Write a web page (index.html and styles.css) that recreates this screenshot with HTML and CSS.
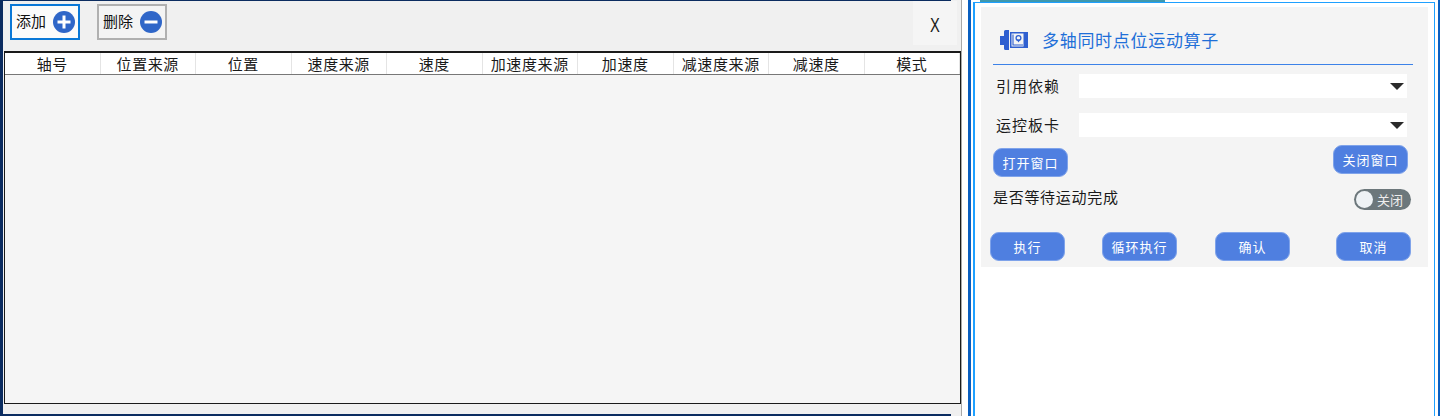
FILE: index.html
```html
<!DOCTYPE html>
<html lang="zh-CN">
  <head>
    <meta charset="UTF-8" />
    <title>多轴同时点位运动算子</title>
    <link rel="stylesheet" href="styles.css">
  </head>
  <body>
    <div class="page">
      <!-- Left: axis table -->
      <section class="axis-panel">
        <div class="panel-edge panel-edge-top"></div>
        <div class="toolbar">
          <button class="tool-btn tool-btn-active">
            <span>添加</span>
            <svg class="tool-icon" viewBox="0 0 24 24"><circle cx="12" cy="12" r="11" fill="#2f66c8"/><path d="M12 5.5v13M5.5 12h13" stroke="#fff" stroke-width="3"/></svg>
          </button>
          <button class="tool-btn">
            <span>删除</span>
            <svg class="tool-icon" viewBox="0 0 24 24"><circle cx="12" cy="12" r="11" fill="#2f66c8"/><path d="M5.5 12h13" stroke="#fff" stroke-width="3"/></svg>
          </button>
          <div class="close-box"><span>X</span></div>
        </div>
        <div class="axis-table">
          <div class="axis-head">
            <div>轴号</div>
            <div>位置来源</div>
            <div>位置</div>
            <div>速度来源</div>
            <div>速度</div>
            <div>加速度来源</div>
            <div>加速度</div>
            <div>减速度来源</div>
            <div>减速度</div>
            <div>模式</div>
          </div>
        </div>
        <div class="scroll-strip"></div>
        <div class="panel-edge panel-edge-bottom"></div>
      </section>

      <!-- Right: operator form -->
      <section class="form-window">
        <div class="form-outer">
          <div class="form-column">
            <div class="frame-tab"></div>
            <div class="form-frame">
              <div class="form-card">
                <div class="form-title">
                  <svg class="title-icon" viewBox="0 0 28 20">
                    <path d="M4 1.5Q4 0 5.5 0H9v20H5.5Q4 20 4 18.5V15H0V6h4z" fill="#2f5fd0"/>
                    <path d="M10 2h18v16H10z" fill="#2f5fd0"/>
                    <path d="M11.5 3.5h12v13h-12z" fill="#f4f4f4"/>
                    <path d="M13 4.5V15h10" fill="none" stroke="#2f5fd0" stroke-width="1.1"/>
                    <circle cx="18.5" cy="8" r="2.4" fill="none" stroke="#2f5fd0" stroke-width="1.3"/>
                    <path d="M16.6 9.6l1.9 3 1.9-3z" fill="#2f5fd0"/>
                  </svg>
                  <h1>多轴同时点位运动算子</h1>
                </div>

                <div class="form-row">
                  <label>引用依赖</label>
                  <div class="select"><span class="arrow"></span></div>
                </div>
                <div class="form-row form-row-second">
                  <label>运控板卡</label>
                  <div class="select"><span class="arrow"></span></div>
                </div>

                <div class="window-btns">
                  <button class="blue-btn open-btn">打开窗口</button>
                  <button class="blue-btn">关闭窗口</button>
                </div>

                <div class="wait-row">
                  <span>是否等待运动完成</span>
                  <div class="switch"><span class="knob"></span><span>关闭</span></div>
                </div>

                <div class="action-btns">
                  <button class="blue-btn">执行</button>
                  <button class="blue-btn">循环执行</button>
                  <button class="blue-btn">确认</button>
                  <button class="blue-btn">取消</button>
                </div>
              </div>
            </div>
          </div>
          <div class="edge-line"></div>
        </div>
      </section>
    </div>
  </body>
</html>
```
FILE: styles.css
```css
/* Basic Reset */
* {
  box-sizing: border-box;
  margin: 0;
  padding: 0;
}

body {
  font-family: "Noto Sans CJK SC", "Liberation Sans", sans-serif;
  background-color: #fff;
  color: #1a1a1a;
  overflow: hidden;
}

.page {
  display: flex;
  width: 1440px;
  height: 416px;
}

/* Left panel */
.axis-panel {
  flex-shrink: 0;
  width: 962px;
  height: 416px;
  display: flex;
  flex-direction: column;
  background-color: #f0f0f0;
  border-left: 3px solid #0b2c60;
  border-right: 1px solid #a8a8a8;
}

.panel-edge {
  width: 948px;
  background-color: #0b2c60;
}

.panel-edge-top {
  height: 1px;
}

.panel-edge-bottom {
  height: 2px;
}

.toolbar {
  height: 50px;
  display: flex;
  align-items: flex-start;
  padding: 3px 0 0 7px;
}

.tool-btn {
  width: 70px;
  height: 36px;
  display: flex;
  align-items: center;
  justify-content: space-between;
  padding: 0 2px 0 4px;
  margin-right: 17px;
  font-family: inherit;
  font-size: 15px;
  color: #111;
  background-color: #f4f4f4;
  border: 2px solid #b0b0b0;
}

.tool-btn span {
  margin-top: -3px;
}

.tool-btn-active {
  border-color: #0a78d7;
  background-color: #fbfbfb;
}

.tool-icon {
  width: 24px;
  height: 24px;
}

.close-box {
  width: 44px;
  height: 44px;
  margin: -3px 4px 0 auto;
  background-color: #f5f5f5;
  font-family: "Liberation Sans", sans-serif;
  font-size: 21px;
  line-height: 47px;
  text-align: center;
}

.close-box span {
  display: inline-block;
  transform: scaleX(0.7);
}

.axis-table {
  height: 353px;
  margin-left: 1px;
  background-color: #f5f5f5;
  border-top: 2px solid #1a1a1a;
  border-left: 1px solid #1a1a1a;
  border-right: 1px solid #1a1a1a;
  border-bottom: 1px solid #1a1a1a;
}

.axis-head {
  display: grid;
  grid-template-columns: repeat(10, 1fr);
  height: 22px;
  background-color: #fff;
  border-bottom: 1px solid #777;
}

.axis-head div {
  font-size: 15px;
  line-height: 21px;
  letter-spacing: 0.6px;
  text-align: center;
  border-right: 1px solid #e4e4e4;
}

.scroll-strip {
  flex: 1;
}

/* Right panel */
.form-window {
  flex: 1;
  height: 416px;
  padding-left: 6px;
}

.form-outer {
  display: flex;
  height: 416px;
  padding-left: 2px;
  border-left: 3px solid #0a5fc0;
}

.form-column {
  display: flex;
  flex-direction: column;
  width: 462px;
  margin-right: 3px;
}

.frame-tab {
  width: 185px;
  height: 2px;
  margin-left: 7px;
  background-color: #3f98ae;
}

.form-frame {
  flex: 1;
  padding: 4px 5px 0 6px;
  background-color: #fff;
  border-left: 2px solid #1ea0ff;
  border-right: 1px solid #1ea0ff;
  border-top: 1px solid #1ea0ff;
}

.form-card {
  width: 447px;
  height: 260px;
  padding: 23px 15px 0 12px;
  background-color: #f4f4f4;
}

.form-title {
  display: flex;
  align-items: center;
  height: 35px;
  padding: 0 0 14px 7px;
  border-bottom: 1px solid #3c82e8;
}

.title-icon {
  width: 28px;
  height: 20px;
  margin-right: 15px;
}

.form-title h1 {
  margin-top: -2px;
  margin-left: -1px;
  font-size: 17px;
  font-weight: 400;
  letter-spacing: 0.7px;
  color: #1f6fd8;
}

.form-row {
  display: flex;
  align-items: center;
  height: 24px;
  margin: 9px 6px 0 3px;
}

.form-row-second {
  margin-top: 15px;
}

.form-row label {
  width: 83px;
  margin-top: -2px;
  font-size: 15px;
  letter-spacing: 1px;
}

.select {
  flex: 1;
  height: 24px;
  display: flex;
  align-items: center;
  justify-content: flex-end;
  padding-right: 3px;
  background-color: #fff;
}

.arrow {
  width: 0;
  height: 0;
  margin-top: 1px;
  border-left: 7px solid transparent;
  border-right: 7px solid transparent;
  border-top: 7px solid #2a2a2a;
}

.blue-btn {
  width: 75px;
  height: 29px;
  font-family: inherit;
  font-size: 13px;
  letter-spacing: 1px;
  color: #fff;
  background-color: #4f7fe0;
  border: 1px solid #7fa3ea;
  border-radius: 9px;
}

.window-btns {
  display: flex;
  justify-content: space-between;
  align-items: flex-start;
  margin: 8px 5px 0 0;
}

.open-btn {
  margin-top: 3px;
}

.wait-row {
  display: flex;
  justify-content: space-between;
  align-items: flex-start;
  height: 23px;
  margin: 10px 2px 0 0;
  font-size: 15px;
  line-height: 20px;
  letter-spacing: 0.7px;
}

.switch {
  display: flex;
  align-items: center;
  width: 57px;
  height: 21px;
  margin-top: 2px;
  padding-left: 2px;
  font-size: 13px;
  letter-spacing: 0;
  color: #eee;
  background-color: #6c777b;
  border-radius: 11px;
}

.knob {
  width: 17px;
  height: 17px;
  margin-right: 4px;
  background-color: #eef2f5;
  border-radius: 50%;
}

.action-btns {
  display: flex;
  margin: 22px 0 0 -3px;
}

.action-btns .blue-btn:nth-child(2) {
  margin-left: 37px;
}

.action-btns .blue-btn:nth-child(3) {
  margin-left: 38px;
}

.action-btns .blue-btn:nth-child(4) {
  margin-left: 46px;
}

.edge-line {
  width: 2px;
  background-color: #0a5fc0;
}
```
